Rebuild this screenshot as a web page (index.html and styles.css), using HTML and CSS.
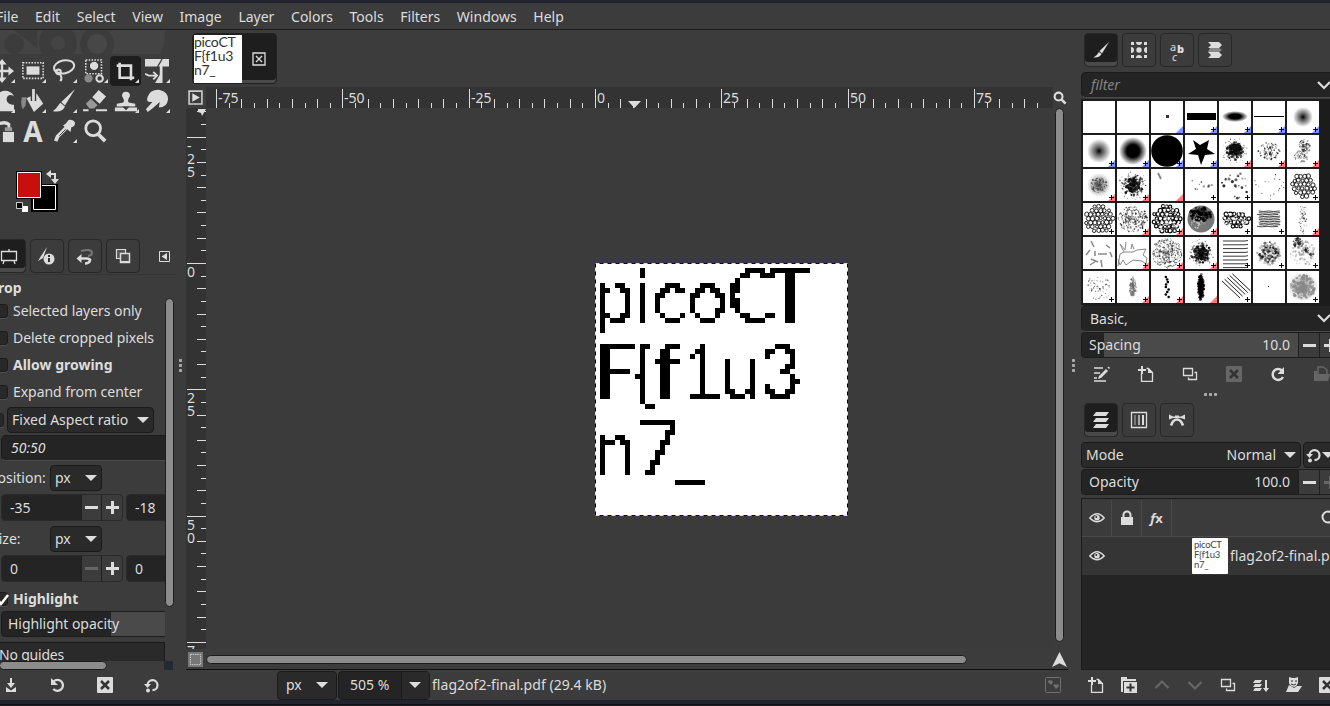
FILE: index.html
```html
<!DOCTYPE html>
<html lang="en">
<head>
<meta charset="utf-8">
<title>GIMP</title>
<link rel="stylesheet" href="styles.css">
</head>
<body>
<svg class="defs" aria-hidden="true">
  <defs>
    <filter id="mosaic" filterUnits="userSpaceOnUse" x="0" y="0" width="250" height="250" color-interpolation-filters="sRGB">
      <feComponentTransfer in="SourceGraphic" result="hard"><feFuncA type="linear" slope="200" intercept="-100"/></feComponentTransfer>
      <feFlood x="2" y="2" width="1" height="1" flood-color="#000" result="pt"/>
      <feOffset in="pt" x="0" y="0" width="5" height="5" result="cell"/>
      <feTile in="cell" x="0" y="0" width="250" height="250" result="grid"/>
      <feComposite in="hard" in2="grid" operator="in" result="samples"/>
      <feMorphology in="samples" operator="dilate" radius="2"/>
    </filter>
    <filter id="soft" x="-20%" y="-20%" width="140%" height="140%"><feGaussianBlur stdDeviation="0.45"/></filter>
    <radialGradient id="fuzz"><stop offset="0" stop-color="#000"/><stop offset=".3" stop-color="#000" stop-opacity=".65"/><stop offset="1" stop-color="#000" stop-opacity="0"/></radialGradient>
    <radialGradient id="fuzz2"><stop offset=".45" stop-color="#000"/><stop offset="1" stop-color="#000" stop-opacity="0"/></radialGradient>
    <symbol id="dup" viewBox="0 0 16 16"><path d="M1.500 2.500h9v7h-9zM12.500 6.500h2v7h-8v-2" fill="none" stroke="currentColor" stroke-width="1.300"/></symbol>
    <symbol id="newdoc" viewBox="0 0 16 16"><path d="M3.500 7.500v8h11v-9l-4-4h-2" fill="none" stroke="currentColor" stroke-width="1.300"/><path d="M10 2v5h5zM3 0h2v3h3v2H5v3H3V5H0V3h3z" fill="currentColor"/></symbol>
    <symbol id="del" viewBox="0 0 16 16"><rect width="16" height="16" rx="1" fill="currentColor"/><path d="M4 4l8 8M12 4l-8 8" stroke="#333" stroke-width="2.600"/></symbol>
    <symbol id="undo" viewBox="0 0 16 16"><path d="M3.500 4.500a5.500 5.500 0 1 1-.2 7.500" fill="none" stroke="currentColor" stroke-width="2.300"/><path d="M1 1v7h7z" fill="currentColor"/></symbol>
    <symbol id="reset" viewBox="0 0 16 16"><path d="M3.500 8a5 5 0 1 1 5 5.200" fill="none" stroke="currentColor" stroke-width="2.200"/><path d="M0 7h7l-3.500 4z" fill="currentColor"/><circle cx="4" cy="13.500" r="2" fill="currentColor"/></symbol>
    <symbol id="eye" viewBox="0 0 16 16"><path d="M.8 8Q8-.5 15.200 8 8 15.500.8 8z" fill="none" stroke="currentColor" stroke-width="1.400"/><circle cx="8" cy="7.800" r="2.700" fill="currentColor"/><circle cx="7.300" cy="6.900" r="1" fill="#333"/></symbol>
    <symbol id="menu" viewBox="0 0 11 11"><path d="M.5.5h10v10H.5z" fill="none" stroke="currentColor"/><path d="M8 2v7L2.500 5.500z" fill="currentColor"/></symbol>
  </defs>
</svg>
<div class="app">
  <nav class="menubar"><span>File</span><span>Edit</span><span>Select</span><span>View</span><span>Image</span><span>Layer</span><span>Colors</span><span>Tools</span><span>Filters</span><span>Windows</span><span>Help</span></nav>
  <main class="main">
    <aside class="left">
      <svg class="wilber" viewBox="0 0 170 25"><path d="M0 0h165q0 16-5 24H0z" fill="#444"/><g fill="#3c3c3c"><circle cx="14" cy="14" r="10"/><circle cx="58" cy="13" r="19"/><circle cx="97" cy="14" r="17"/><path d="M14 0h23v18z"/></g><circle cx="58" cy="13" r="7" fill="#444"/><circle cx="97" cy="14" r="10" fill="#474747"/></svg>
      <div class="tools">
        <i class="sub"><svg viewBox="0 0 26 26"><path d="M3 13h20M13 3v20" stroke="currentColor" stroke-width="2.500"/><path d="M13 0l5 6H8zM13 26l5-6H8zM26 13l-6-5v10zM0 13l6-5v10z" fill="currentColor"/></svg></i>
        <i class="sub"><svg viewBox="0 0 26 26"><path d="M2 4h22v17H2z" fill="none" stroke="currentColor" stroke-width="1.700" stroke-dasharray="1.700 1.400"/><path d="M6 8h14v9H6z" fill="currentColor"/></svg></i>
        <i class="sub"><svg viewBox="0 0 26 26" fill="none" stroke="currentColor" stroke-width="2.200"><ellipse cx="13" cy="8.500" rx="11" ry="7" transform="rotate(-12 13 8)"/><circle cx="7" cy="14" r="2.500"/><path d="M8 16q4 4 1 8"/></svg></i>
        <i class="sub"><svg viewBox="0 0 26 26"><path d="M3 1h17v15H3z" fill="none" stroke="currentColor" stroke-width="1.700" stroke-dasharray="1.700 1.400"/><circle cx="12" cy="7.500" r="4.500" fill="currentColor"/><circle cx="6" cy="21" r="4.500" fill="#888"/><circle cx="18" cy="21" r="3.500" fill="none" stroke="currentColor" stroke-width="2.200"/></svg></i>
        <i class="sub active"><svg viewBox="0 0 26 26"><path d="M1 5h19.500v20M5 1v20.500h20" fill="none" stroke="currentColor" stroke-width="3.600"/></svg></i>
        <i class="sub"><svg viewBox="0 0 26 26"><path d="M0 0h26v8H19v18h-8l5-9V8H0z" fill="currentColor"/><path d="M18.500 0l-8 14" stroke="#3c3c3c" stroke-width="1.400" fill="none"/><path d="M0 16l4 2h8M9 14l4 4-4 4" stroke="currentColor" stroke-width="2" fill="none"/></svg></i>
        <i class="sub"><svg viewBox="0 0 26 26"><path d="M5 12C7 0 22-1 26 8c-4-3-8-1-8 3 0 4 4 6 8 6v7H0v-5q4-1 5-7z" fill="currentColor"/></svg></i>
        <i class="sub"><svg viewBox="0 0 26 26"><path d="M1 9q-2 8 1 13l3-4 1-9z" fill="#888"/><path d="M6 10l11-5 7 11-10 9z" fill="currentColor"/><path d="M13.500 0v13" stroke="#3c3c3c" stroke-width="6"/><path d="M13.500 1v11" stroke="currentColor" stroke-width="3" stroke-linecap="round"/></svg></i>
        <i class="sub"><svg viewBox="0 0 26 26"><path d="M25 0L10 14l4 4zM9 15l5 4q-3 7-13 5 4-3 8-9z" fill="currentColor"/></svg></i>
        <i><svg viewBox="0 0 26 26"><path d="M17 1l8 7-7 8-8-7z" fill="currentColor"/><path d="M9 10l7 7-4 4H7l-4-5z" fill="#999"/><path d="M8.500 9.500l8.500 8" stroke="#3c3c3c" stroke-width="1.500"/><path d="M0 23h6M14 23h12" stroke="currentColor" stroke-width="2"/></svg></i>
        <i class="sub"><svg viewBox="0 0 26 26"><path d="M13 3a4 4 0 0 1 3 7q-2 4 1 5l6 1v3H3v-3l6-1q3-1 1-5a4 4 0 0 1 3-7zM1 20h24v4H1z" fill="currentColor"/><path d="M9 19h8l-4 4z" fill="#3c3c3c"/></svg></i>
        <i class="sub"><svg viewBox="0 0 26 26"><path d="M3 8q3-8 13-7 9 2 9 10-1 9-10 9l1-6-8 7-5 4-2-3 7-8q-8 1-5-6z" fill="currentColor"/></svg></i>
        <i><svg viewBox="0 0 26 26"><path d="M8 4q10-4 14 1v5h-3V7q-4-2-10 0z" fill="currentColor"/><path d="M14 14h12v11H14z" fill="currentColor"/><path d="M16 9h8v4h-8z" fill="#999"/></svg></i>
        <i class="letter">A</i>
        <i class="sub"><svg viewBox="0 0 26 26"><path d="M15 5l3-4q5-1 7 3 0 4-4 5l-1 5-8-7z" fill="currentColor"/><path d="M16 9L6 19l-2 5" stroke="currentColor" stroke-width="4"/><path d="M15 11l-7 7" stroke="#3c3c3c" stroke-width="1"/></svg></i>
        <i><svg viewBox="0 0 26 26"><circle cx="11" cy="10" r="8" fill="none" stroke="currentColor" stroke-width="3"/><path d="M16 16l8 8" stroke="currentColor" stroke-width="4"/></svg></i>
      </div>
      <svg class="colors" viewBox="0 0 60 45"><path d="M21 18h23v24H21z" stroke="#000" stroke-width="4"/><path d="M21.500 17.500h22v24h-22z" stroke="#fff"/><path d="M4 3h26v28H4z"/><path d="M5.500 4.500h23v25h-23z" fill="#c90e0e" stroke="#fff"/><path d="M37 6h6v7" fill="none" stroke="#ddd" stroke-width="2"/><path d="M34 6l5-4v8zM43 16l-4-5h8z" fill="#ddd"/><path d="M10 38h6v6h-6z" fill="#fff"/><path d="M4.500 34.500h6v6h-6z" stroke="#ccc"/></svg>
      <div class="tabs ltabs">
        <b class="tab on"><svg viewBox="0 0 20 20"><path d="M2.500 5.500h15v9h-15zM5 15l-1 3M15 15l1 3M10 3v2" stroke="currentColor" stroke-width="1.300" fill="none"/></svg></b>
        <b class="tab"><svg viewBox="0 0 20 20"><path d="M10 1L4 10l2 2zM4 10l2 2-5 3z" fill="currentColor"/><circle cx="12" cy="13" r="5.500" fill="currentColor"/><path d="M12 12v4M12 9v2" stroke="#333" stroke-width="2"/></svg></b>
        <b class="tab"><svg viewBox="0 0 20 20"><path d="M6 5q11-2.500 11 2 0 2.500-4 3" fill="none" stroke="#777" stroke-width="2"/><path d="M5 12.500h7q4 .5 3 2-1 3-5 3" fill="none" stroke="currentColor" stroke-width="2.400"/><path d="M1.500 12.500l5-4.500v9z" fill="currentColor"/></svg></b>
        <b class="tab"><svg viewBox="0 0 20 20"><path d="M3.500 3.500h9v9h-9z" fill="#555" stroke="currentColor" stroke-width="1.200"/><path d="M7.500 7.500h9v9h-9z" fill="#4c4c4c" stroke="currentColor" stroke-width="1.500"/><path d="M7 15h10v2H7z" fill="currentColor"/></svg></b>
        <svg class="mini"><use href="#menu"/></svg>
      </div>
      <section class="options">
        <div class="optbody">
          <div class="title">Crop</div>
          <label class="ck"><u></u>Selected layers only</label>
          <label class="ck"><u></u>Delete cropped pixels</label>
          <label class="ck strong"><u></u><span>Allow growing</span></label>
          <label class="ck"><u></u>Expand from center</label>
          <div class="fixrow"><u></u><div class="combo fixed"><span>Fixed Aspect ratio</span><em class="arr"></em></div></div>
          <div class="entry ratio">50:50</div>
          <div class="unitrow"><span>Position:</span><div class="combo unit">px<em class="arr"></em></div></div>
          <div class="spins"><div class="spin"><span>-35</span><b class="minus"></b><b class="plus"></b></div><div class="spin"><span>-18</span></div></div>
          <div class="unitrow size"><span>Size:</span><div class="combo unit">px<em class="arr"></em></div></div>
          <div class="spins"><div class="spin"><span>0</span><b class="minus off"></b><b class="plus"></b></div><div class="spin"><span>0</span></div></div>
          <label class="ck strong hl"><u class="checked"><svg viewBox="0 0 14 14"><path d="M3 7l3 4 7-9" fill="none" stroke="#fff" stroke-width="2.500"/></svg></u>Highlight</label>
          <div class="slider">Highlight opacity</div>
          <div class="guides">No guides</div>
        </div>
        <div class="vs"></div>
      </section>
      <div class="hscroll"><div></div><s></s></div>
      <div class="lbtns">
        <svg viewBox="0 0 16 16"><path d="M7 1h2v5h3l-4 5-4-5h3zM3 10l5 3.500L13 10v5H3z" fill="currentColor"/></svg>
        <svg><use href="#undo"/></svg><svg><use href="#del"/></svg><svg><use href="#reset"/></svg>
      </div>
    </aside>
    <div class="grip v"></div>
    <section class="center">
      <div class="imgtabs"><div class="imgtab"><div class="thumb"><p>picoCT</p><p>F{f1u3</p><p>n7_</p></div><svg viewBox="0 0 14 14"><path d="M1 1h12v12H1zM4 4l6 6M10 4l-6 6" fill="none" stroke="#ddd" stroke-width="1.300"/></svg></div></div>
      <div class="view">
        <div class="corner"><svg viewBox="0 0 14 14"><path d="M1 1h12v12H1z" fill="none" stroke="#ccc" stroke-width="1.500"/><path d="M4 3v8l7-4z" fill="#ddd"/></svg></div>
        <svg class="hruler" id="hruler" width="847" height="21"></svg>
        <div class="corner rc"><svg viewBox="0 0 16 16"><circle cx="7" cy="7" r="4.200" fill="none" stroke="#ddd" stroke-width="2.200"/><path d="M10 10l4.500 4.500" stroke="#ddd" stroke-width="2.800"/></svg></div>
        <svg class="vruler" id="vruler" width="20" height="541"></svg>
        <div class="canvas">
          <svg class="image" width="253" height="253" viewBox="0 0 253 253">
            <rect width="253" height="253" fill="#fff"/>
            <g class="pixeltext">
              <g filter="url(#mosaic)"><text y="58.500" x="-1 39.500 56.500 91.500 131.500 172.500">picoCT</text></g>
              <g filter="url(#mosaic)" transform="translate(0 1)"><text y="133.500" x="0 38 58.500 85 125 164">F{f1u3</text></g>
              <g filter="url(#mosaic)" transform="translate(0 2)"><text y="208.500" x="0 41 79">n7_</text></g>
            </g>
            <rect x=".5" y=".5" width="252" height="252" fill="none" stroke="#000"/>
            <rect x=".5" y=".5" width="252" height="252" fill="none" stroke="#ff0" stroke-dasharray="4 4"/>
          </svg>
        </div>
        <div class="vtrack"><div></div></div>
        <div class="corner mask"><svg viewBox="0 0 16 16"><path d="M0 0h16v16H0z" fill="#777"/><path d="M2.500 2.500h11v11h-11z" fill="none" stroke="#ddd" stroke-dasharray="1.500 1"/></svg></div>
        <div class="htrack"><div></div></div>
        <div class="corner rc"><svg viewBox="0 0 16 16"><path d="M8 0l8 16-8-4-8 4z" fill="#ddd"/></svg></div>
      </div>
      <div class="status"><div class="combo px">px<em class="arr"></em></div><div class="zoom"><span>505 %</span><b><em class="arr"></em></b></div><span class="file">flag2of2-final.pdf (29.4 kB)</span>
        <svg class="hearts" viewBox="0 0 16 16"><rect x=".5" y=".5" width="15" height="15" rx="1" fill="none" stroke="#707070"/><path d="M3 4l2-1 1 1 1-1 1 2-2 3-3-3zM8 8l2-1 1 1 2-1 1 2-3 3z" fill="#707070"/></svg>
      </div>
    </section>
    <div class="grip v rg"></div>
    <aside class="right">
      <div class="tabs">
        <b class="tab on"><svg viewBox="0 0 20 20"><path d="M18 2L8.500 11l2.500 2.500zM8 12l2.500 2q-2 4-8 3.500 3.500-2 5.500-5.500z" fill="currentColor"/></svg></b>
        <b class="tab"><svg viewBox="0 0 20 20" fill="currentColor"><path d="M2 2h3v3H2zM7 2h6a3 3 0 0 1-6 0zM15 2h3v3h-3zM2 15h3v3H2zM15 15h3v3h-3zM7 18h6a3 3 0 0 0-6 0zM2 7v6a3 3 0 0 0 0-6zM18 7v6a3 3 0 0 1 0-6z"/><circle cx="10" cy="10" r="2.700"/></svg></b>
        <b class="tab fonts"><span>a</span><strong>b</strong><em>c</em></b>
        <b class="tab"><svg viewBox="0 0 20 20"><path d="M3 2h11l3 3-3 3H3l3-3zM3 12h11l3 3-3 3H3l3-3z" fill="currentColor"/><path d="M14 8H5L3 12h11l3-2z" fill="#888"/></svg></b>
        <svg class="mini"><use href="#menu"/></svg>
      </div>
      <div class="entry filter"><span>filter</span><svg viewBox="0 0 14 9"><path d="M1 1l6 6 6-6" fill="none" stroke="#ddd" stroke-width="2.200"/></svg></div>
      <div class="brushes" id="brushes"></div>
      <div class="entry basic"><span>Basic,</span><svg viewBox="0 0 14 9"><path d="M1 1l6 6 6-6" fill="none" stroke="#ddd" stroke-width="2.200"/></svg></div>
      <div class="scale spacing"><span>Spacing</span><span>10.0</span><b class="minus"></b><b class="plus"></b></div>
      <div class="rbtns">
        <svg viewBox="0 0 16 16"><path d="M0 2h9M0 7h6M0 12h3M0 15h12" stroke="currentColor" stroke-width="1.700"/><path d="M12 3l2 2-7 7-3 1 1-3zM13.500 1.500l1-1 1.500 1.500-1 1z" fill="currentColor"/></svg>
        <svg><use href="#newdoc"/></svg><svg><use href="#dup"/></svg><svg class="dim"><use href="#del"/></svg>
        <svg viewBox="0 0 16 16"><path d="M12.500 5a5.500 5.500 0 1 0 .5 6" fill="none" stroke="currentColor" stroke-width="2.500"/><path d="M14 1v7H7.500z" fill="currentColor"/></svg>
        <svg class="dim" viewBox="0 0 16 16"><path d="M4 8V1h5l4 3v4" fill="none" stroke="currentColor" stroke-width="1.500"/><path d="M0 5h3v3h13l-2 7H0z" fill="currentColor"/></svg>
      </div>
      <div class="grip h"></div>
      <div class="tabs t2">
        <b class="tab on"><svg viewBox="0 0 20 20"><path d="M5 2h13l-3 4H2zM5 8h13l-3 4H2zM5 14h13l-3 4H2z" fill="currentColor"/></svg></b>
        <b class="tab"><svg viewBox="0 0 20 20"><path d="M2.500 2.500h15v15h-15z" fill="none" stroke="currentColor" stroke-width="1.300"/><path d="M6 5v10" stroke="#777" stroke-width="2"/><path d="M10 5v10" stroke="#aaa" stroke-width="2"/><path d="M14 5v10" stroke="currentColor" stroke-width="2"/></svg></b>
        <b class="tab"><svg viewBox="0 0 20 20"><path d="M2 4.500l4 2h2v-1h4v1h2l4-2v5l-4-1.500H6L2 9.500z" fill="currentColor"/><path d="M4 15.500q2-6 6-6t6 6" fill="none" stroke="currentColor" stroke-width="2.600"/></svg></b>
        <svg class="mini"><use href="#menu"/></svg>
      </div>
      <div class="moderow"><div class="combo mode"><span>Mode</span><span class="normal">Normal</span><em class="arr"></em></div><div class="combo rst"><svg><use href="#reset"/></svg><em class="arr"></em></div></div>
      <div class="scale opacity"><span>Opacity</span><span>100.0</span><b class="minus"></b><b class="plus off"></b></div>
      <div class="layers">
        <div class="lhead"><b><svg><use href="#eye"/></svg></b><b><svg viewBox="0 0 16 16"><path d="M2 7h12v8H2z" fill="currentColor"/><path d="M4.500 8V5a3.500 3.500 0 0 1 7 0v3" fill="none" stroke="currentColor" stroke-width="2"/></svg></b><b class="fx"><em>f</em>x</b><svg class="search" viewBox="0 0 16 16"><circle cx="7" cy="7" r="5.500" fill="none" stroke="#ddd" stroke-width="2"/></svg></div>
        <div class="layer"><svg><use href="#eye"/></svg><div class="lthumb"><p>picoCT</p><p>F{f1u3</p><p>n7_</p></div><span>flag2of2-final.pdf</span></div>
      </div>
      <div class="rbtns lb">
        <svg><use href="#newdoc"/></svg>
        <svg viewBox="0 0 16 16"><path d="M0 0h6v2h9v2H2v11H0z" fill="currentColor"/><path d="M3 5h13v11H3z" fill="currentColor"/><path d="M9.500 6.500v8M5.500 10.500h8" stroke="#333" stroke-width="2"/></svg>
        <svg class="dim" viewBox="0 0 16 16"><path d="M1.500 11L8 4.500l6.500 6.500" fill="none" stroke="currentColor" stroke-width="2.200"/></svg>
        <svg class="dim" viewBox="0 0 16 16"><path d="M1.500 5L8 11.500 14.500 5" fill="none" stroke="currentColor" stroke-width="2.200"/></svg>
        <svg><use href="#dup"/></svg>
        <svg viewBox="0 0 16 16"><path d="M2 3h7L7 6H0zM2 7h7l-2 3H0zM2 11h7l-2 3H0zM12 3h2v8h2l-3 4-3-4h2z" fill="currentColor"/></svg>
        <svg viewBox="0 0 16 16"><path d="M3 0q5 2 9 0v6q-1 3-4 4-4-1-5-4zM3 8l5 3 3-2h5l-4 6H0z" fill="currentColor"/><path d="M5 4h2M9 4h2M5 7q3 2 5 0" stroke="#333" fill="none"/></svg>
        <svg><use href="#del"/></svg>
      </div>
    </aside>
  </main>
</div>
<script src="script.js"></script>
</body>
</html>
```
FILE: styles.css
```css
* { box-sizing: border-box; }
body { margin: 0; width: 1330px; height: 706px; overflow: hidden; background: #22252f; color: #dcdcdc; font: 14px/20px "Noto Sans", sans-serif; }
p { margin: 0; }
i, em { font-style: normal; }
u { text-decoration: none; }
.defs { position: absolute; width: 0; height: 0; }
.app { margin-top: 3px; height: 697px; background: #3c3c3c; display: flex; flex-direction: column; box-shadow: 0 4px #22252f, 0 5px #111; }
.menubar { height: 27px; border-bottom: 1px solid #1c1c1c; display: flex; gap: 16.65px; padding-top: 4px; flex: none; }
.menubar span:first-child { margin-left: -4px; }
.main { flex: 1; display: flex; min-height: 0; }
.left { width: 175px; flex: none; overflow: hidden; display: flex; flex-direction: column; }
.wilber { width: 170px; height: 25px; flex: none; }
.tools { margin: 1px 0 0 -14px; width: 188px; display: grid; grid-template-columns: repeat(6, 31px); grid-auto-rows: 30px; flex: none; height: 92px; }
.tools i { display: flex; align-items: center; justify-content: center; position: relative; border-radius: 4px; }
.tools svg { width: 24px; height: 24px; }
.tools .active { background: #1e1e1e; }
.tools .active svg { width: 19px; height: 19px; }
.sub::after { content: ""; position: absolute; right: 2px; bottom: 3px; border: 2px solid; border-color: transparent #ddd #ddd transparent; }
.tools .letter { font: bold 28px/30px "Noto Sans", sans-serif; padding-left: 1px; }
.colors { width: 60px; height: 45px; margin: 20px 0 0 12px; flex: none; }
.tabs { display: flex; gap: 4px; padding-left: 3px; height: 35px; flex: none; position: relative; }
.ltabs { margin: 26px 0 0 -11px; }
.tab { width: 34px; height: 34px; border: 1px solid #282828; border-radius: 4px; display: flex; align-items: center; justify-content: center; flex: none; }
.tab svg { width: 20px; height: 20px; }
.tab.on { background: #1e1e1e; box-shadow: inset 0 -4px #4a4a4a; }
.mini { width: 11px; height: 11px; margin: 12px 0 0 auto; flex: none; }
.ltabs .mini { margin-right: 5px; }
.options { display: flex; height: 388px; flex: none; border-top: 1px solid #353535; }
.optbody { width: 165px; overflow: hidden; height: 388px; flex: none; }
.title { font-weight: bold; height: 22px; padding-top: 3px; margin-left: -11px; }
.strong { font-weight: bold; }
.ck { display: flex; align-items: center; height: 27px; white-space: nowrap; margin-left: -6px; gap: 5px; letter-spacing: -.04px; }
.ck.strong { letter-spacing: 0; }
.ck u, .fixrow u { width: 14px; height: 14px; background: #282828; border: 1px solid #1c1c1c; border-radius: 3px; box-shadow: 0 1px #505050; }
.checked svg { display: block; width: 14px; height: 14px; }
.fixrow { display: flex; align-items: center; gap: 3px; margin-left: -10px; height: 28px; margin-top: 1px; }
.combo { background: #2a2a2a; border: 1px solid #1a1a1a; border-radius: 4px; display: flex; align-items: center; justify-content: space-between; height: 26px; padding: 0 4px; flex: none; }
.fixed { width: 147px; }
.arr { width: 0; height: 0; border: 6px solid transparent; border-top-color: #ddd; border-bottom: 0; }
.entry { background: #242424; border: 1px solid #1c1c1c; border-bottom-color: #4a4a4a; border-radius: 5px; height: 26px; font-style: italic; line-height: 24px; padding-left: 9px; }
.ratio { width: 180px; margin-left: 1px; margin-top: 1px; }
.unitrow { display: flex; height: 34px; align-items: center; }
.unitrow span { margin-left: -11px; width: 61px; }
.unitrow.size span { margin-left: -9px; width: 59px; }
.unitrow.size { height: 35px; }
.unit { width: 52px; }
.spins { display: flex; gap: 3px; height: 27px; margin-left: 1px; margin-top: -1px; }
.spin { display: flex; width: 122px; flex: none; border: 1px solid #2a2a2a; border-radius: 4px; background: #242424; line-height: 25px; overflow: hidden; }
.spin span { width: 80px; padding-left: 8px; }
.minus, .plus { width: 21px; background: linear-gradient(#ddd, #ddd) center/13px 3px no-repeat #3c3c3c; border-left: 1px solid #202020; }
.plus { background: linear-gradient(#ddd, #ddd) center/13px 3px no-repeat, linear-gradient(#ddd, #ddd) center/3px 13px no-repeat #3c3c3c; }
.minus.off { background: linear-gradient(#666, #666) center/13px 3px no-repeat #3c3c3c; }
.plus.off { background: linear-gradient(#666, #666) center/13px 3px no-repeat, linear-gradient(#666, #666) center/3px 13px no-repeat #3c3c3c; }
.ck.hl { height: 30px; margin-top: 2px; }
.slider { height: 26px; border: 1px solid #1c1c1c; border-radius: 4px; background: linear-gradient(90deg, #242424 109px, #4a4a4a 109px); width: 180px; margin: -3px 0 0 1px; padding-left: 6px; line-height: 23px; letter-spacing: -.05px; }
.guides { margin: 5px 0 0 -3px; border: 1px solid #1a1a1a; background: #2a2a2a; height: 26px; line-height: 24px; padding-left: 1px; letter-spacing: -.2px; }
.vs { margin-top: 23px; width: 9px; height: 309px; border: 1px solid #1c1c1c; border-radius: 5px; background: #8c8c8c; }
.hscroll { display: flex; justify-content: space-between; height: 9px; flex: none; width: 173px; margin-top: -1px; position: relative; background: #3c3c3c; }
.hscroll div { width: 108px; margin-left: -1px; background: #8c8c8c; border: 1px solid #1c1c1c; border-radius: 5px; }
.hscroll s { width: 9px; background: #252835; }
.lbtns { display: flex; gap: 31px; margin: 7px 0 0 3px; }
.lbtns svg, .rbtns svg { width: 16px; height: 16px; flex: none; }
.grip { flex: none; }
.grip.v { width: 11px; background: radial-gradient(circle, #aaa 1.300px, transparent 2px) 0 0/11px 5px repeat-y; margin-top: 328px; height: 15px; }
.center { width: 882px; flex: none; display: flex; flex-direction: column; }
.imgtabs { height: 57px; padding: 3px 0 0 6px; flex: none; }
.imgtab { width: 85px; height: 51px; background: #1e1e1e; border: 1px solid #222; border-radius: 4px; box-shadow: inset 0 -3px #4a4a4a; display: flex; padding: 1px; align-items: center; gap: 10px; }
.imgtab svg { width: 14px; height: 14px; }
.thumb { width: 48px; height: 48px; background: #fff; color: #333; font: 14px/14px Lato, sans-serif; letter-spacing: -.3px; overflow: hidden; flex: none; }
.view { display: grid; grid-template-columns: 20px 847px 15px; grid-template-rows: 21px 541px 21px; border-bottom: 1px solid #111; flex: none; height: 583px; }
.corner { display: flex; align-items: center; padding-left: 2px; }
.corner.rc { padding-left: 0; margin-left: -1px; }
.corner svg { width: 15px; height: 15px; flex: none; }
.hruler, .vruler { background: #333; display: block; }
.hruler text, .vruler text { font: 14px "Noto Sans", sans-serif; fill: #dcdcdc; }
.canvas { padding: 155px 0 0 389px; background: #3b3b3b; }
.image { display: block; }
.pixeltext text { font: 74px Lato, sans-serif; fill: #000; }
.vtrack div { width: 9px; height: 534px; margin-left: 2px; }
.vtrack div, .htrack div { background: #8c8c8c; border: 1px solid #1c1c1c; border-radius: 5px; }
.htrack div { width: 761px; height: 9px; margin-top: 6px; }
.status { display: flex; height: 30px; padding-left: 91px; align-items: center; }
.status .px { width: 60px; height: 29px; padding: 0 8px; margin-right: 1px; }
.zoom { display: flex; width: 92px; height: 29px; border: 1px solid #1a1a1a; border-radius: 4px; background: #242424; align-items: center; }
.zoom span { width: 62px; padding-left: 11px; }
.zoom b { border-left: 1px solid #1a1a1a; background: #2a2a2a; height: 27px; flex: 1; display: flex; align-items: center; padding-left: 7px; }
.file { margin-left: 2px; letter-spacing: .04px; }
.hearts { width: 16px; height: 16px; margin: 0 7px 0 auto; }
.grip.rg { width: 11px; }
.right { width: 255px; margin-left: 2px; flex: none; display: flex; flex-direction: column; padding-top: 3px; }
.right > .tabs { width: 255px; }
.right .mini { margin-right: -5px; }
.fonts { position: relative; font-size: 11px; line-height: 11px; }
.fonts span { margin-top: -8px; font-weight: normal; }
.fonts em { position: absolute; left: 11px; top: 17px; font-style: italic; font-weight: normal; }
.fonts strong { margin: -4px 0 0 1px; }
.filter { margin-top: 4px; color: #858585; }
.filter, .basic { display: flex; align-items: center; justify-content: space-between; width: 260px; padding-right: 9px; flex: none; }
.filter svg, .basic svg { width: 14px; height: 9px; }
.brushes { background: #1c1c1c; height: 206px; padding: 2px 0 0 2px; margin-top: 1px; display: grid; grid-template-columns: repeat(7, 32px); grid-auto-rows: 32px; gap: 2px; flex: none; }
.brushes svg { background: #fff; width: 32px; height: 32px; display: block; }
.entry.basic { font-style: normal; padding-left: 8px; height: 27px; line-height: 26px; }
.scale { display: flex; height: 26px; border: 1px solid #1c1c1c; border-radius: 4px; line-height: 23px; padding-left: 7px; background: #242424; width: 260px; flex: none; }
.spacing { background: linear-gradient(90deg, #242424 22px, #4a4a4a 22px); }
.opacity { margin-top: 1px; }
.scale span:nth-child(2) { margin-left: auto; padding-right: 8px; }
.scale b { flex: none; }
.scale b:nth-child(4) { width: 21px; }
.rbtns { display: flex; gap: 28px; padding: 8px 0 0 13px; height: 34px; flex: none; }
.dim { color: #666; }
.grip.h { width: 15px; height: 5px; margin: 0 0 0 122px; background: radial-gradient(circle, #aaa 1.300px, transparent 2px) 0 0/5px 5px; }
.t2 { margin-top: 6px; }
.moderow { display: flex; gap: 2px; margin-top: 4px; flex: none; }
.mode { width: 220px; }
.mode .normal { margin-left: auto; margin-right: 8px; }
.rst { width: 50px; justify-content: flex-start; padding-left: 2px; }
.rst svg { width: 16px; height: 16px; }
.layers { border: 1px solid #1c1c1c; margin-top: 3px; background: #242424; height: 172px; flex: none; width: 260px; }
.lhead { display: flex; height: 38px; background: #3b3b3b; border-bottom: 1px solid #4a4a4a; align-items: center; }
.lhead b { width: 30px; height: 36px; border-right: 1px solid #4a4a4a; display: flex; align-items: center; justify-content: center; }
.lhead svg, .layer svg { width: 16px; height: 16px; flex: none; }
.lhead .fx { font: bold 13px "Noto Sans", sans-serif; }
.lhead .fx em { font-style: italic; }
.search { margin-left: auto; margin-right: 3px; }
.layer { background: #353535; height: 38px; display: flex; align-items: center; padding-left: 7px; white-space: nowrap; }
.lthumb { background: #fff; width: 36px; height: 36px; margin: 0 2px 0 87px; color: #444; font: 9.500px/10px Lato, sans-serif; letter-spacing: -.3px; padding: 2px; flex: none; border-radius: 1px; }
.rbtns.lb { gap: 17.100px; padding: 7px 0 0 6.500px; }
```
FILE: script.js
```js
const NS = 'http://www.w3.org/2000/svg';
function add(parent, tag, attrs, text) {
  const e = document.createElementNS(NS, tag);
  for (const k in attrs) e.setAttribute(k, attrs[k]);
  if (text) e.textContent = text;
  parent.appendChild(e);
  return e;
}

const h = document.getElementById('hruler');
for (let i = -30; i < 36; i++) {
  const x = Math.floor(389.5 + i * 12.63) + 0.5;
  if (x < 0 || x > 840) continue;
  const len = i % 10 === 0 ? 19 : i % 2 === 0 ? 9 : 5;
  add(h, 'path', { d: `M${x} 21v-${len}`, stroke: '#dcdcdc' });
  if (i % 10 === 0) add(h, 'text', { x: x + 1.5, y: 16 }, String(i * 2.5));
}
add(h, 'path', { d: 'M422 14h13l-6.500 7z', fill: '#ddd' });

const v = document.getElementById('vruler');
for (let i = -12; i < 31; i++) {
  const y = Math.floor(155.5 + i * 12.63) + 0.5;
  if (y < 0) continue;
  const len = i % 10 === 0 ? 19 : i % 2 === 0 ? 9 : 5;
  add(v, 'path', { d: `M20 ${y}h-${len}`, stroke: '#dcdcdc' });
  if (i % 10 === 0) [...String(i * 2.5)].forEach((c, n) => add(v, 'text', { x: 1, y: y + 13 + n * 13 }, c));
}
add(v, 'path', { d: 'M12 1h8l-4 7-1-3-3-1z', fill: '#ddd' });

let seed = 7;
const rnd = () => (seed = (seed * 16807) % 2147483647) / 2147483647;
const spec = ['', '', 'dot', 'bar b+', 'oval b+', 'line b+', 'fuzzS b+',
  'fuzzM b+', 'fuzzL b+', 'disc b+', 'star b+', 'blob r+ 10 240', 'splat r+ 9 110', 'splatT r+ 10 110',
  'smoke r+', 'blob r+ 12 330', 'tick r', 'dots + 12 9', 'dots + 14 22', 'specks x 13 16', 'cells + 12 30',
  'cells + 14 50', 'splat r+ 13 260', 'cells r+ 14 90', 'half r+', 'cellsW + 14 90', 'hatch +', 'splatN r+ 12 60',
  'sticks', 'sketch r+', 'splatG r+ 15 420', 'blob r+ 11 320', 'lines +', 'patch + 11 60', 'wisp + 12 130',
  'splatG + 13 60', 'col1 r+', 'col2 r+', 'col3 r', 'diag +', 'pin', 'cloud +'];
const root = document.getElementById('brushes');
spec.forEach((s, idx) => {
  const svg = add(root, 'svg', { viewBox: '0 0 32 32' });
  const [kind, mark = '', R = 10, N = 50] = s.split(' ');
  const soft = /blob|splat|smoke|patch|wisp|cloud|col|half|cells|sticks|oval|hatch/.test(kind);
  const g = add(svg, 'g', soft ? { filter: 'url(#soft)' } : {});
  const E = (t, a) => add(g, t, a);
  const P = (d, w = 1, c = '#111') => E('path', { d, fill: 'none', stroke: c, 'stroke-width': w });
  const scatter = (rx, ry, n, c = '#000', min = .3, max = .9, cx = 16, cy = 16) => {
    for (let k = 0; k < n; k++) {
      const a = rnd() * 6.283, r = Math.pow(rnd(), .65);
      E('circle', { cx: cx + Math.cos(a) * rx * r, cy: cy + Math.sin(a) * ry * r, r: min + rnd() * (max - min), fill: c, opacity: .35 + rnd() * .6 });
    }
  };
  if (kind === 'dot') E('rect', { x: 15, y: 14, width: 3, height: 3, fill: '#333' });
  if (kind === 'bar') E('rect', { x: 2, y: 12, width: 29, height: 7 });
  if (kind === 'oval') E('ellipse', { cx: 16, cy: 15.5, rx: 13, ry: 5.5, fill: 'url(#fuzz2)' });
  if (kind === 'line') P('M1 15.5h30', 1, '#000');
  if (kind === 'fuzzS') E('circle', { cx: 16, cy: 16, r: 10, fill: 'url(#fuzz)' });
  if (kind === 'fuzzM') E('circle', { cx: 16, cy: 16, r: 12, fill: 'url(#fuzz)' });
  if (kind === 'fuzzL') E('circle', { cx: 16, cy: 16, r: 14, fill: 'url(#fuzz2)' });
  if (kind === 'disc') E('circle', { cx: 16, cy: 16, r: 15.8 });
  if (kind === 'star') E('path', { d: 'M8 5l7 5 9-5-2 9 8 5-10 1-4 10-3-10-10-1 8-5z' });
  if (kind === 'blob') { scatter(7, 7, 90, '#000', .7, 1.6); scatter(+R - 1, +R - 1, 130, '#111', .4, 1.3); scatter(+R + 3, +R + 3, 90, '#000', .2, .6); }
  if (kind === 'splat') scatter(+R + 2, +R, +N, '#222', .3, .9);
  if (kind === 'splatT') { scatter(6, 7, 90, '#222', .3, .8, 18, 11); scatter(7, 7, 80, '#222', .3, .7, 14, 21); }
  if (kind === 'splatN') scatter(4, 15, 60, '#000', .3, .7);
  if (kind === 'splatG') scatter(+R, +R, +N, '#333', .3, .8);
  if (kind === 'smoke') { E('circle', { cx: 16, cy: 16, r: 12, fill: 'url(#fuzz)', opacity: .6 }); scatter(8, 8, 120, '#444', .3, 1); }
  if (kind === 'patch') { scatter(12, 12, 110, '#999', .8, 1.6); scatter(11, 11, 60, '#111', .8, 1.7); scatter(10, 10, 20, '#fff', .8, 1.6); }
  if (kind === 'wisp') { scatter(5, 5, 60, '#222', .5, 1.3, 11, 6); scatter(4, 3, 30, '#222', .5, 1.1, 19, 13); scatter(3, 3, 16, '#333', .4, 1, 24, 17); scatter(13, 13, 90, '#aaa', .4, 1.2); }
  if (kind === 'tick') P('M7 4l3 6', 2, '#888');
  if (kind === 'dots') scatter(+R, +R, +N, '#222', .6, 1.7);
  if (kind === 'specks') scatter(15, 15, 20, '#000', .5, .6);
  if (kind === 'cells' || kind === 'cellsW') {
    const ry = kind === 'cellsW' ? 8 : R;
    for (let y = 3; y < 31; y += 4) for (let x = 3 + (y % 8 === 3 ? 0 : 2); x < 31; x += 4) {
      if (((x - 16) / R) ** 2 + ((y - 16) / ry) ** 2 > 1) continue;
      E('circle', { cx: x + rnd(), cy: y + rnd(), r: 1.5 + rnd() * .8, fill: 'none', stroke: '#111', 'stroke-width': N > 80 ? 1.2 : .9 });
    }
    if (N > 80) scatter(+R, ry, 90, '#fff', .4, 1);
  }
  if (kind === 'half') {
    E('circle', { cx: 16, cy: 16, r: 13.5, fill: '#777' });
    scatter(12, 7, 130, '#000', .5, 1.8, 16, 11);
    scatter(8, 5, 40, '#ccc', .3, 1, 12, 20);
  }
  if (kind === 'hatch') for (let y = 8; y < 24; y += 1.7) P(`M${4 + rnd() * 3} ${y}l5 .5 5-.5 5 .5 6-.5`, 1, '#444');
  if (kind === 'sticks') P('M8 4l3 6M23 8l4 3M3 18l4-5M12 14v5M15 17h9M27 15l2 5M8 22l7 3M7 28l6-4M18 23l1 7', 1.5, '#888');
  if (kind === 'sketch') P('M1 29l2-12 4-2-4-8 5 6 1-8M7 15h9l4-2 9-1-3 6 4 3-1 6-4-3-9-1-7 5-3-5-3 5-2-6M14 12l1-5 2 5', 1, '#888');
  if (kind === 'lines') for (let y = 4; y < 31; y += 3.8) P(`M4 ${y}h22l3-.5`, .9, '#222');
  if (kind === 'col1') scatter(3.5, 10, 180, '#666');
  if (kind === 'col2') for (let y = 6; y < 28; y += 2.5) E('circle', { cx: 14 + rnd() * 4, cy: y, r: 1.3 });
  if (kind === 'col3') { scatter(3, 13, 160, '#000', .6, 1.4); E('ellipse', { cx: 16, cy: 15, rx: 2.5, ry: 11 }); }
  if (kind === 'diag') for (let k = 0; k < 5; k++) P(`M${3 + k * 2.6} ${10 - k * 1.8}l18 17`, 1, '#222');
  if (kind === 'pin') E('rect', { x: 15, y: 15, width: 1, height: 1 });
  if (kind === 'cloud') { E('circle', { cx: 16, cy: 16, r: 15, fill: 'url(#fuzz)', opacity: .5 }); scatter(12, 12, 130, '#888', .8, 1.8); }
  if (mark.includes('b') || idx === 2) add(svg, 'path', { d: 'M32 25v7h-7z', fill: '#7a94ff' });
  if (mark.includes('r')) add(svg, 'path', { d: 'M32 25v7h-7z', fill: '#ff7c7c' });
  if (mark.includes('+')) add(svg, 'path', { d: 'M26 28.5h5M28.5 26v5', stroke: '#000' });
});
```
